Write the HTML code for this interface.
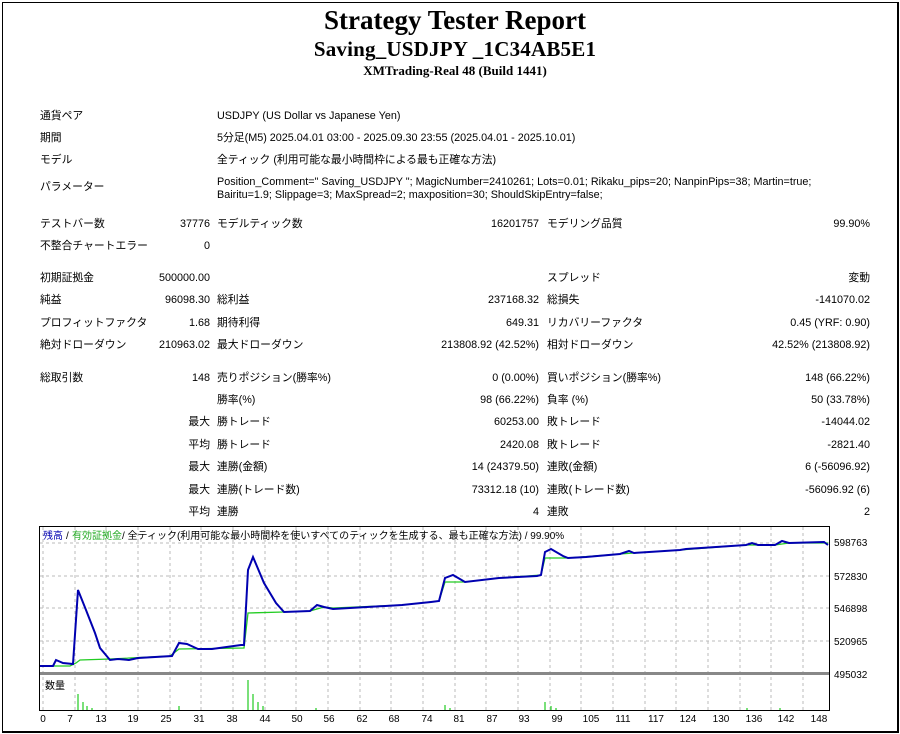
<!DOCTYPE html>
<html><head><meta charset="utf-8"><style>
body{margin:0;width:900px;height:734px;background:#fff;position:relative;overflow:hidden;font-family:"Liberation Sans","Noto Sans CJK JP",sans-serif;font-size:10.8px;color:#000}
.frame{position:absolute;left:2px;top:2px;width:894px;height:728px;border:1px solid #000;border-width:1px 2px 2px 1px}
.t{position:absolute;white-space:nowrap;line-height:13px}
.r{position:absolute;white-space:nowrap;line-height:13px;text-align:right}
.h{position:absolute;left:0;width:910px;text-align:center;font-family:"Liberation Serif",serif;font-weight:bold;white-space:nowrap}
</style></head><body>
<div class="frame"></div>
<div class="h" style="top:5px;font-size:27px;line-height:30px">Strategy Tester Report</div>
<div class="h" style="top:37px;font-size:21px;line-height:24px;letter-spacing:0.2px">Saving_USDJPY _1C34AB5E1</div>
<div class="h" style="top:63px;font-size:13px;line-height:15px">XMTrading-Real 48 (Build 1441)</div>

<div class="t" style="left:40px;top:110px">通貨ペア</div><div class="t" style="left:217px;top:110px">USDJPY (US Dollar vs Japanese Yen)</div>
<div class="t" style="left:40px;top:132px">期間</div><div class="t" style="left:217px;top:132px">5分足(M5) 2025.04.01 03:00 - 2025.09.30 23:55 (2025.04.01 - 2025.10.01)</div>
<div class="t" style="left:40px;top:154px">モデル</div><div class="t" style="left:217px;top:154px">全ティック (利用可能な最小時間枠による最も正確な方法)</div>
<div class="t" style="left:40px;top:181px">パラメーター</div><div class="t" style="left:217px;top:176px">Position_Comment=" Saving_USDJPY "; MagicNumber=2410261; Lots=0.01; Rikaku_pips=20; NanpinPips=38; Martin=true;<br>Bairitu=1.9; Slippage=3; MaxSpread=2; maxposition=30; ShouldSkipEntry=false;</div>

<div class="t" style="left:40px;top:218px">テストバー数</div><div class="r" style="right:690px;top:218px">37776</div>
<div class="t" style="left:217px;top:218px">モデルティック数</div><div class="r" style="right:361px;top:218px">16201757</div>
<div class="t" style="left:547px;top:218px">モデリング品質</div><div class="r" style="right:30px;top:218px">99.90%</div>
<div class="t" style="left:40px;top:240px">不整合チャートエラー</div><div class="r" style="right:690px;top:240px">0</div>

<div class="t" style="left:40px;top:272px">初期証拠金</div><div class="r" style="right:690px;top:272px">500000.00</div>
<div class="t" style="left:547px;top:272px">スプレッド</div><div class="r" style="right:30px;top:272px">変動</div>
<div class="t" style="left:40px;top:294px">純益</div><div class="r" style="right:690px;top:294px">96098.30</div>
<div class="t" style="left:217px;top:294px">総利益</div><div class="r" style="right:361px;top:294px">237168.32</div>
<div class="t" style="left:547px;top:294px">総損失</div><div class="r" style="right:30px;top:294px">-141070.02</div>
<div class="t" style="left:40px;top:317px">プロフィットファクタ</div><div class="r" style="right:690px;top:317px">1.68</div>
<div class="t" style="left:217px;top:317px">期待利得</div><div class="r" style="right:361px;top:317px">649.31</div>
<div class="t" style="left:547px;top:317px">リカバリーファクタ</div><div class="r" style="right:30px;top:317px">0.45 (YRF: 0.90)</div>
<div class="t" style="left:40px;top:339px">絶対ドローダウン</div><div class="r" style="right:690px;top:339px">210963.02</div>
<div class="t" style="left:217px;top:339px">最大ドローダウン</div><div class="r" style="right:361px;top:339px">213808.92 (42.52%)</div>
<div class="t" style="left:547px;top:339px">相対ドローダウン</div><div class="r" style="right:30px;top:339px">42.52% (213808.92)</div>

<div class="t" style="left:40px;top:372px">総取引数</div><div class="r" style="right:690px;top:372px">148</div>
<div class="t" style="left:217px;top:372px">売りポジション(勝率%)</div><div class="r" style="right:361px;top:372px">0 (0.00%)</div>
<div class="t" style="left:547px;top:372px">買いポジション(勝率%)</div><div class="r" style="right:30px;top:372px">148 (66.22%)</div>
<div class="t" style="left:217px;top:394px">勝率(%)</div><div class="r" style="right:361px;top:394px">98 (66.22%)</div>
<div class="t" style="left:547px;top:394px">負率 (%)</div><div class="r" style="right:30px;top:394px">50 (33.78%)</div>
<div class="r" style="right:690px;top:416px">最大</div><div class="t" style="left:217px;top:416px">勝トレード</div><div class="r" style="right:361px;top:416px">60253.00</div>
<div class="t" style="left:547px;top:416px">敗トレード</div><div class="r" style="right:30px;top:416px">-14044.02</div>
<div class="r" style="right:690px;top:439px">平均</div><div class="t" style="left:217px;top:439px">勝トレード</div><div class="r" style="right:361px;top:439px">2420.08</div>
<div class="t" style="left:547px;top:439px">敗トレード</div><div class="r" style="right:30px;top:439px">-2821.40</div>
<div class="r" style="right:690px;top:461px">最大</div><div class="t" style="left:217px;top:461px">連勝(金額)</div><div class="r" style="right:361px;top:461px">14 (24379.50)</div>
<div class="t" style="left:547px;top:461px">連敗(金額)</div><div class="r" style="right:30px;top:461px">6 (-56096.92)</div>
<div class="r" style="right:690px;top:484px">最大</div><div class="t" style="left:217px;top:484px">連勝(トレード数)</div><div class="r" style="right:361px;top:484px">73312.18 (10)</div>
<div class="t" style="left:547px;top:484px">連敗(トレード数)</div><div class="r" style="right:30px;top:484px">-56096.92 (6)</div>
<div class="r" style="right:690px;top:506px">平均</div><div class="t" style="left:217px;top:506px">連勝</div><div class="r" style="right:361px;top:506px">4</div>
<div class="t" style="left:547px;top:506px">連敗</div><div class="r" style="right:30px;top:506px">2</div>

<svg style="position:absolute;left:0;top:0" width="900" height="734" font-family="Liberation Sans, Noto Sans CJK JP, sans-serif" font-size="10">
<rect x="39.5" y="526.5" width="790" height="184" fill="none" stroke="#000"/>
<g stroke="#bbb" stroke-dasharray="3,3">
<line x1="40" y1="543" x2="829" y2="543"/><line x1="40" y1="576" x2="829" y2="576"/><line x1="40" y1="608" x2="829" y2="608"/><line x1="40" y1="641" x2="829" y2="641"/>
<line x1="43" y1="527" x2="43" y2="710"/><line x1="75" y1="527" x2="75" y2="710"/><line x1="106" y1="527" x2="106" y2="710"/><line x1="138" y1="527" x2="138" y2="710"/><line x1="170" y1="527" x2="170" y2="710"/><line x1="201" y1="527" x2="201" y2="710"/><line x1="233" y1="527" x2="233" y2="710"/><line x1="265" y1="527" x2="265" y2="710"/><line x1="296" y1="527" x2="296" y2="710"/><line x1="328" y1="527" x2="328" y2="710"/><line x1="360" y1="527" x2="360" y2="710"/><line x1="391" y1="527" x2="391" y2="710"/><line x1="423" y1="527" x2="423" y2="710"/><line x1="455" y1="527" x2="455" y2="710"/><line x1="486" y1="527" x2="486" y2="710"/><line x1="518" y1="527" x2="518" y2="710"/><line x1="550" y1="527" x2="550" y2="710"/><line x1="581" y1="527" x2="581" y2="710"/><line x1="613" y1="527" x2="613" y2="710"/><line x1="645" y1="527" x2="645" y2="710"/><line x1="676" y1="527" x2="676" y2="710"/><line x1="708" y1="527" x2="708" y2="710"/><line x1="740" y1="527" x2="740" y2="710"/><line x1="771" y1="527" x2="771" y2="710"/><line x1="803" y1="527" x2="803" y2="710"/>
</g>
<rect x="40" y="672" width="789" height="3" fill="#888"/>
<polyline fill="none" stroke="#22cc22" stroke-width="1.3" points="40,666 70,666 76,663 80,660 110,659 170,656 179,649 244,648 248,613 284,612 310,611 324,607 333,608 402,605 439,601 445,582 465,582 499,578 541,575 545,558 568,558 620,554 649,552 680,550 746,545 775,545 789,543 828,543"/>
<polyline fill="none" stroke="#0000b0" stroke-width="2" points="40,666 53,666 56,660 63,663 73,664 78,590 86,610 95,633 100,648 110,660 118,659 129,660 138,658 172,656 179,643 187,644 198,649 212,649 241,645 244,645 248,570 253,557 264,583 276,603 284,612 310,611 317,605 324,607 333,609 402,605 431,602 439,601 445,578 453,575 465,582 499,578 537,576 541,575 545,552 551,549 563,556 568,558 586,557 620,554 629,551 634,553 649,552 680,550 686,549 746,545 752,543 758,545 775,545 782,541 789,543 824,542 828,545"/>
<g stroke="#22cc22" stroke-width="1.2">
<line x1="78" y1="710" x2="78" y2="694"/><line x1="83" y1="710" x2="83" y2="702"/><line x1="87" y1="710" x2="87" y2="706"/><line x1="92" y1="710" x2="92" y2="708"/><line x1="179" y1="710" x2="179" y2="706"/>
<line x1="248" y1="710" x2="248" y2="680"/><line x1="253" y1="710" x2="253" y2="694"/><line x1="258" y1="710" x2="258" y2="702"/><line x1="263" y1="710" x2="263" y2="706"/><line x1="316" y1="710" x2="316" y2="708"/>
<line x1="445" y1="710" x2="445" y2="705"/><line x1="450" y1="710" x2="450" y2="708"/><line x1="545" y1="710" x2="545" y2="702"/><line x1="551" y1="710" x2="551" y2="706"/><line x1="556" y1="710" x2="556" y2="708"/><line x1="747" y1="710" x2="747" y2="708"/><line x1="780" y1="710" x2="780" y2="708"/>
</g>
<text x="43" y="539" fill="#0000b0">残高</text><text x="66" y="539">/</text><text x="72" y="539" fill="#22aa22">有効証拠金</text><text x="122" y="539">/ 全ティック(利用可能な最小時間枠を使いすべてのティックを生成する、最も正確な方法) / 99.90%</text>
<text x="45" y="689">数量</text>
<g font-size="10"><text x="834" y="546">598763</text><text x="834" y="580">572830</text><text x="834" y="612">546898</text><text x="834" y="645">520965</text><text x="834" y="678">495032</text></g>
<g text-anchor="middle" font-size="10">
<text x="43" y="722">0</text><text x="70" y="722">7</text><text x="101" y="722">13</text><text x="133" y="722">19</text><text x="166" y="722">25</text><text x="199" y="722">31</text><text x="232" y="722">38</text><text x="265" y="722">44</text><text x="297" y="722">50</text><text x="329" y="722">56</text><text x="362" y="722">62</text><text x="394" y="722">68</text><text x="427" y="722">74</text><text x="459" y="722">81</text><text x="492" y="722">87</text><text x="524" y="722">93</text><text x="557" y="722">99</text><text x="591" y="722">105</text><text x="623" y="722">111</text><text x="656" y="722">117</text><text x="688" y="722">124</text><text x="721" y="722">130</text><text x="754" y="722">136</text><text x="786" y="722">142</text><text x="819" y="722">148</text>
</g>
</svg>
</body></html>
